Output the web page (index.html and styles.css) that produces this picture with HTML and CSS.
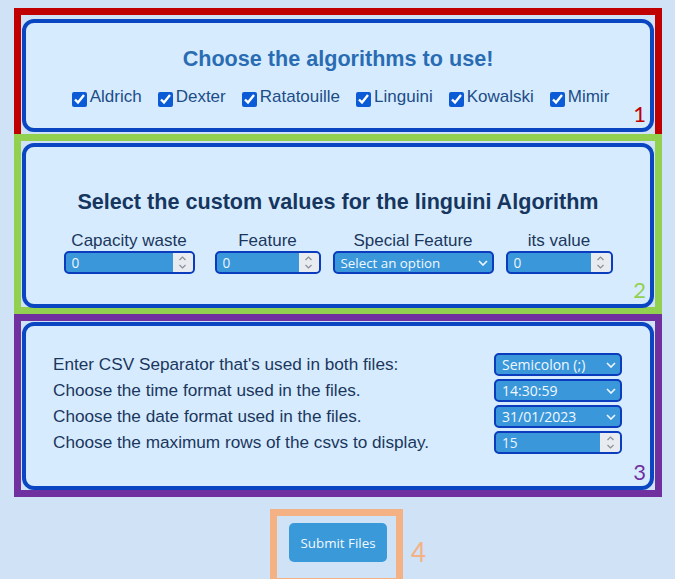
FILE: index.html
```html
<!DOCTYPE html>
<html>
<head>
<meta charset="utf-8">
<link rel="stylesheet" href="styles.css">
</head>
<body>
<div class="page">
  <section class="frame f1">
    <div class="card">
      <h2 class="title1">Choose the algorithms to use!</h2>
      <div class="algos">
        <label class="algo"><input type="checkbox" checked>Aldrich</label>
        <label class="algo"><input type="checkbox" checked>Dexter</label>
        <label class="algo"><input type="checkbox" checked>Ratatouille</label>
        <label class="algo"><input type="checkbox" checked>Linguini</label>
        <label class="algo"><input type="checkbox" checked>Kowalski</label>
        <label class="algo"><input type="checkbox" checked>Mimir</label>
      </div>
      <span class="tag t1">1</span>
    </div>
  </section>

  <section class="frame f2">
    <div class="card">
      <h2 class="title2">Select the custom values for the linguini Algorithm</h2>
      <div class="fields">
        <div class="field w1">
          <label>Capacity waste</label>
          <div class="num"><input type="number" value="0"><span class="spin"><svg width="9" height="15" viewBox="0 0 9 15"><polyline points="1.5,5 4.5,2 7.5,5" /><polyline points="1.5,10 4.5,13 7.5,10" /></svg></span></div>
        </div>
        <div class="field w2">
          <label>Feature</label>
          <div class="num"><input type="number" value="0"><span class="spin"><svg width="9" height="15" viewBox="0 0 9 15"><polyline points="1.5,5 4.5,2 7.5,5" /><polyline points="1.5,10 4.5,13 7.5,10" /></svg></span></div>
        </div>
        <div class="field w3">
          <label>Special Feature</label>
          <div class="sel">
            <select><option>Select an option</option></select>
            <svg class="chev" width="10" height="6" viewBox="0 0 10 6"><polyline points="1,1 5,5 9,1" /></svg>
          </div>
        </div>
        <div class="field w4">
          <label>its value</label>
          <div class="num"><input type="number" value="0"><span class="spin"><svg width="9" height="15" viewBox="0 0 9 15"><polyline points="1.5,5 4.5,2 7.5,5" /><polyline points="1.5,10 4.5,13 7.5,10" /></svg></span></div>
        </div>
      </div>
      <span class="tag t2">2</span>
    </div>
  </section>

  <section class="frame f3">
    <div class="card">
      <div class="opts">
        <span>Enter CSV Separator that's used in both files:</span>
        <div class="sel">
          <select><option>Semicolon (;)</option></select>
          <svg class="chev" width="10" height="6" viewBox="0 0 10 6"><polyline points="1,1 5,5 9,1" /></svg>
        </div>
        <span>Choose the time format used in the files.</span>
        <div class="sel">
          <select><option>14:30:59</option></select>
          <svg class="chev" width="10" height="6" viewBox="0 0 10 6"><polyline points="1,1 5,5 9,1" /></svg>
        </div>
        <span>Choose the date format used in the files.</span>
        <div class="sel">
          <select><option>31/01/2023</option></select>
          <svg class="chev" width="10" height="6" viewBox="0 0 10 6"><polyline points="1,1 5,5 9,1" /></svg>
        </div>
        <span>Choose the maximum rows of the csvs to display.</span>
        <div class="num"><input type="number" value="15"><span class="spin"><svg width="9" height="15" viewBox="0 0 9 15"><polyline points="1.5,5 4.5,2 7.5,5" /><polyline points="1.5,10 4.5,13 7.5,10" /></svg></span></div>
      </div>
      <span class="tag t3">3</span>
    </div>
  </section>

  <div class="submit-wrap">
    <div class="frame4">
      <button class="submit">Submit Files</button>
      <span class="tag t4">4</span>
    </div>
  </div>
</div>
</body>
</html>
```

FILE: styles.css
```css
html, body {
  margin: 0;
}
body {
  background: #d0e2f6;
  font-family: "Liberation Sans", Arial, sans-serif;
  height: 579px;
  overflow: hidden;
}
.page {
  padding-top: 8px;
  margin-left: 14px;
  width: 648px;
}
.frame {
  box-sizing: border-box;
  border: 7px solid;
  padding-left: 1px;
  padding-right: 1px;
}
.f1 {
  border-color: #c00000;
  border-bottom: 0;
  height: 126px;
  padding-top: 4px;
}
.f2 {
  border-color: #92d050;
  height: 180px;
  padding-top: 2px;
}
.f3 {
  border-color: #7030a0;
  height: 183px;
  padding-top: 1px;
}
.card {
  position: relative;
  box-sizing: border-box;
  width: 632px;
  border: 4px solid #0b46c2;
  border-radius: 12px;
  background: #d6ecfe;
}
.f1 .card {
  height: 113px;
  padding-top: 23px;
}
.f2 .card {
  height: 165px;
  padding-top: 42px;
}
.f3 .card {
  height: 168px;
  padding: 25px 28px 0 27px;
}
h2 {
  margin: 0;
  font-size: 21.6px;
  line-height: 26px;
  font-weight: bold;
  text-align: center;
}
.title1 {
  color: #2a6cb3;
}
.title2 {
  color: #16365f;
}
.algos {
  display: flex;
  justify-content: center;
  gap: 16px;
  margin-top: 15px;
  padding-left: 5px;
  font-size: 17px;
  line-height: 20px;
  color: #1d4d88;
}
.algo {
  display: flex;
  align-items: center;
}
.algo input {
  width: 15px;
  height: 15px;
  margin: 4px 3px 0 0;
  accent-color: #0b5bd6;
}
.fields {
  display: flex;
  justify-content: center;
  margin-top: 16px;
}
.field {
  display: flex;
  flex-direction: column;
  align-items: stretch;
}
.field label {
  font-size: 17px;
  line-height: 20px;
  color: #1b365d;
  text-align: center;
}
.w1 { width: 131px; margin-right: 20px; }
.w2 { width: 106px; margin-right: 12px; }
.w3 { width: 161px; margin-right: 12px; }
.w4 { width: 107px; }

.num {
  display: flex;
  box-sizing: border-box;
  height: 23px;
  border: 2px solid #0a3cbd;
  border-radius: 5px;
  background: #3a98da;
  overflow: hidden;
}
.num input {
  flex: 1;
  min-width: 0;
  border: 0;
  margin: 0;
  padding: 0 0 0 6px;
  background: transparent;
  color: #eef4ff;
  font-family: "Open Sans", sans-serif;
  font-size: 13.6px;
  outline: none;
  -moz-appearance: textfield;
  appearance: textfield;
}
.num input::-webkit-inner-spin-button,
.num input::-webkit-outer-spin-button {
  -webkit-appearance: none;
  margin: 0;
}
.spin {
  width: 20px;
  background: #e8ebf0;
  display: flex;
  align-items: center;
  justify-content: center;
}
.spin svg polyline {
  fill: none;
  stroke: #8a8f98;
  stroke-width: 1.2;
}
.sel {
  position: relative;
  display: flex;
}
.sel select {
  -webkit-appearance: none;
  appearance: none;
  width: 100%;
  height: 23px;
  box-sizing: border-box;
  margin: 0;
  border: 2px solid #0a3cbd;
  border-radius: 5px;
  background: #3a98da;
  color: #f2f7ff;
  font-family: "Open Sans", sans-serif;
  font-size: 13.33px;
  padding: 0 0 0 6px;
  outline: none;
}
.opts .sel select {
  font-size: 14px;
}
.chev {
  position: absolute;
  right: 6px;
  top: 9px;
  pointer-events: none;
}
.chev polyline {
  fill: none;
  stroke: #f2f7ff;
  stroke-width: 1.6;
}
.opts {
  display: grid;
  grid-template-columns: 1fr 128px;
  grid-auto-rows: 26px;
  align-items: center;
  font-size: 17.2px;
  line-height: 26px;
  color: #1b365d;
}
.submit-wrap {
  display: flex;
  justify-content: center;
  margin-top: 12px;
}
.frame4 {
  position: relative;
  box-sizing: border-box;
  width: 133px;
  height: 76px;
  margin-right: 3px;
  border: 7px solid #f4b183;
  padding: 7px 9px 0 12px;
}
.submit {
  display: block;
  width: 98px;
  height: 39px;
  border: 0;
  border-radius: 5px;
  background: #3a9ad9;
  color: #f3f8ff;
  font-family: "Open Sans", sans-serif;
  font-size: 13.33px;
  padding: 0;
}
.tag {
  position: absolute;
  font-family: Lato, sans-serif;
  line-height: 1;
}
.t1, .t2, .t3 {
  font-size: 22px;
  right: 4px;
  bottom: 3px;
}
.t1 { color: #c00000; }
.t2 { color: #92d050; }
.t3 { color: #7030a0; }
.t4 {
  color: #f4b183;
  font-size: 26px;
  left: 134px;
  top: 22.6px;
}
```
